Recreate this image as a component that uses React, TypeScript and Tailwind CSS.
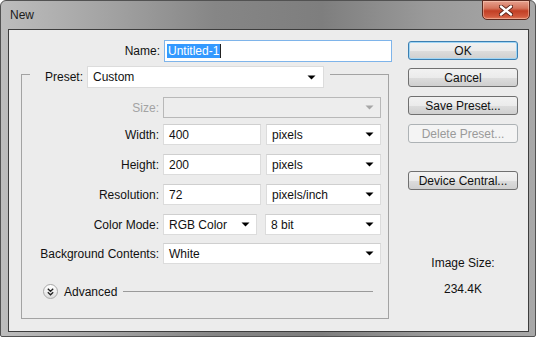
import React from "react";

const Tri = ({ color = "#000" }: { color?: string }) => (
  <svg width="9" height="5" viewBox="0 0 9 5" className="shrink-0">
    <path d="M0.5 0.5 L8.5 0.5 L4.5 4.5 Z" fill={color} />
  </svg>
);

function Select({ w, value, disabled }: { w: string; value?: string; disabled?: boolean }) {
  return (
    <div
      className={`${w} h-[21px] flex items-center justify-between pl-[5px] pr-[6px] border ${
        disabled ? "bg-[#ededed] border-[#b8b8b8]" : "bg-white border-[#dcdcdc] border-t-[#cfcfcf]"
      }`}
    >
      <span className="leading-[14px] text-[#111]">{value}</span>
      <Tri color={disabled ? "#a6a6a6" : "#000"} />
    </div>
  );
}

function Input({ w, value }: { w: string; value: string }) {
  return (
    <div className={`${w} h-[21px] flex items-center pl-[5px] bg-white border border-[#dcdcdc] border-t-[#cfcfcf]`}>
      <span className="leading-[14px] text-[#111]">{value}</span>
    </div>
  );
}

function Btn({ label, primary, disabled, className = "" }: { label: string; primary?: boolean; disabled?: boolean; className?: string }) {
  return (
    <div
      className={`w-[110px] h-[19px] rounded-[3px] border flex items-center justify-center leading-[14px] ${className} ${
        primary
          ? "border-[#3c7fb1] shadow-[inset_0_0_0_1px_#9fd5f5] bg-[linear-gradient(180deg,#f2f2f2_0%,#ebebeb_50%,#dddddd_51%,#cfcfcf_100%)] text-[#111]"
          : disabled
          ? "border-[#adb2b5] bg-[#f4f4f4] text-[#9a9a9a]"
          : "border-[#707070] bg-[linear-gradient(180deg,#f2f2f2_0%,#ebebeb_50%,#dddddd_51%,#cfcfcf_100%)] text-[#111]"
      }`}
    >
      {label}
    </div>
  );
}

function Row({ label, children, className = "" }: { label: string; children: React.ReactNode; className?: string }) {
  return (
    <div className={`flex items-center ${className}`}>
      <div className="w-[138px] text-right pr-[1px] leading-[14px] text-[#111]">{label}</div>
      <div className="ml-[3px] flex items-center">{children}</div>
    </div>
  );
}

export default function App() {
  return (
    <div
      className="w-[536px] h-[337px] overflow-hidden bg-white text-[12px]"
      style={{ fontFamily: '"Liberation Sans", Arial, sans-serif' }}
    >
      <div className="w-[536px] h-[337px] rounded-t-[6px] rounded-b-[2px] border border-[#525252] bg-[linear-gradient(90deg,#bdbdbd_0%,#a3a3a3_20%,#868686_40%,#7e7e7e_60%,#9a9a9a_80%,#a8a8a8_100%)] flex flex-col">
        {/* title bar */}
        <div className="h-[28px] flex items-start justify-between">
          <div className="pl-[9px] pt-[7px] leading-[14px] text-[#1b1b1b]">New</div>
          <div className="-mt-[1px] mr-[5px] w-[48px] h-[20px] rounded-b-[5px] border border-[#5c2a20] bg-[linear-gradient(180deg,#e6a08e_0%,#d4745c_40%,#c23f25_55%,#d1583c_85%,#e07a5c_100%)] shadow-[inset_0_0_0_1px_rgba(255,220,200,0.45)] flex items-center justify-center">
            <svg width="14" height="11" viewBox="0 0 14 11">
              <path d="M2 1.5 L12 9.5 M12 1.5 L2 9.5" stroke="#5a2318" strokeWidth="4.2" strokeLinecap="round" />
              <path d="M2 1.5 L12 9.5 M12 1.5 L2 9.5" stroke="#ffffff" strokeWidth="2.4" strokeLinecap="round" />
            </svg>
          </div>
        </div>

        {/* content */}
        <div className="ml-[7px] mr-[6px] h-[303px] border border-[#3d3d3d] bg-[#ececec] flex">
          {/* left column */}
          <div className="w-[383px] flex flex-col">
            <div className="mt-[10px] flex items-center">
              <div className="w-[151px] text-right leading-[14px] text-[#111]">Name:</div>
              <div className="ml-[4px] w-[228px] h-[22px] bg-white border border-[#7eb4ea] flex items-center pl-[2px]">
                <span className="bg-[#3399ff] text-white leading-[14px] px-[1px]">Untitled-1</span>
                <span className="w-[1px] h-[14px] bg-[#222]" />
              </div>
            </div>

            {/* group box */}
            <div className="mt-[12px] ml-[12px] w-[368px] h-[245px] border border-[#a3a3a3] flex flex-col">
              <div className="-mt-[9px] ml-[8px] w-[300px] bg-[#ececec] flex items-center">
                <div className="w-[53px] text-right leading-[14px] text-[#111]">Preset:</div>
                <div className="ml-[4px] w-[237px] h-[22px] bg-white border border-[#dcdcdc] flex items-center justify-between pl-[5px] pr-[7px]">
                  <span className="leading-[14px] text-[#111]">Custom</span>
                  <Tri />
                </div>
              </div>

              <div className="mt-[9px] flex items-center">
                <div className="w-[138px] text-right pr-[1px] leading-[14px] text-[#a3a3a3]">Size:</div>
                <div className="ml-[3px]">
                  <Select w="w-[218px]" disabled />
                </div>
              </div>

              <Row label="Width:" className="mt-[6px]">
                <Input w="w-[98px]" value="400" />
                <div className="ml-[5px]"><Select w="w-[115px]" value="pixels" /></div>
              </Row>
              <Row label="Height:" className="mt-[9px]">
                <Input w="w-[98px]" value="200" />
                <div className="ml-[5px]"><Select w="w-[115px]" value="pixels" /></div>
              </Row>
              <Row label="Resolution:" className="mt-[9px]">
                <Input w="w-[98px]" value="72" />
                <div className="ml-[5px]"><Select w="w-[115px]" value="pixels/inch" /></div>
              </Row>
              <Row label="Color Mode:" className="mt-[9px]">
                <Select w="w-[94px]" value="RGB Color" />
                <div className="ml-[8px]"><Select w="w-[116px]" value="8 bit" /></div>
              </Row>
              <Row label="Background Contents:" className="mt-[8px]">
                <Select w="w-[218px]" value="White" />
              </Row>

              <div className="mt-[20px] ml-[21px] flex items-center">
                <div className="w-[15px] h-[15px] rounded-full border border-[#a8a8a8] bg-[linear-gradient(180deg,#ffffff_0%,#f0f0f0_50%,#dcdcdc_100%)] flex items-center justify-center">
                  <svg width="7" height="8" viewBox="0 0 7 8">
                    <path d="M0.8 0.8 L3.5 3.3 L6.2 0.8 M0.8 4.3 L3.5 6.8 L6.2 4.3" stroke="#222" strokeWidth="1.3" fill="none" />
                  </svg>
                </div>
                <div className="ml-[6px] leading-[14px] text-[#111]">Advanced</div>
                <div className="ml-[6px] w-[250px] h-[1px] bg-[#9a9a9a]" />
              </div>
            </div>
          </div>

          {/* right column */}
          <div className="ml-[16px] w-[110px] flex flex-col">
            <Btn label="OK" primary className="mt-[11px]" />
            <Btn label="Cancel" className="mt-[8px]" />
            <Btn label="Save Preset..." className="mt-[9px]" />
            <Btn label="Delete Preset..." disabled className="mt-[9px]" />
            <Btn label="Device Central..." className="mt-[28px]" />
            <div className="mt-[66px] text-center leading-[14px] text-[#111]">Image Size:</div>
            <div className="mt-[12px] text-center leading-[14px] text-[#111]">234.4K</div>
          </div>
        </div>
      </div>
    </div>
  );
}
